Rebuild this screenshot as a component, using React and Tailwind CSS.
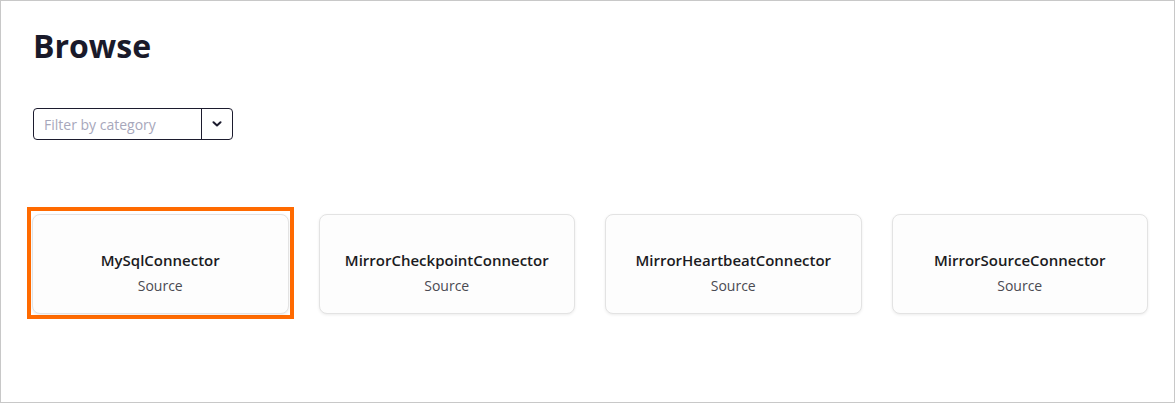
import React from "react"

const connectors = [
  { name: "MySqlConnector", type: "Source", selected: true },
  { name: "MirrorCheckpointConnector", type: "Source" },
  { name: "MirrorHeartbeatConnector", type: "Source" },
  { name: "MirrorSourceConnector", type: "Source" },
]

function ConnectorCard({ name, type }) {
  return (
    <div className="h-[100px] rounded-lg border border-[#e3e3e3] bg-[#fdfdfd] shadow-[0_1px_3px_rgba(0,0,0,0.08)] flex flex-col items-center pt-[35px]">
      <div className="text-[15px] leading-5 font-semibold text-[#1b1b22]">{name}</div>
      <div className="mt-[6px] text-[14px] leading-5 text-[#4a4a52]">{type}</div>
    </div>
  )
}

export default function App() {
  return (
    <div
      className="h-[403px] border border-[#c8c8c8] bg-white pl-[31px] pr-[26px]"
      style={{ fontFamily: '"Open Sans", "Noto Sans", sans-serif' }}
    >
      <h1 className="pl-[1px] pt-[25px] text-[32px] leading-[40px] font-bold text-[#1a1a2a]">
        Browse
      </h1>

      <div className="ml-[1px] mt-[42px] flex h-[32px] w-[200px] rounded-[4px] border border-[#1c1b2e] bg-white">
        <div className="flex-1 flex items-center pl-[10px] text-[14px] text-[#a7a7bb]">
          Filter by category
        </div>
        <div className="w-[31px] border-l border-[#1c1b2e] flex items-center justify-center">
          <svg width="10" height="6" viewBox="0 0 10 6" fill="none">
            <path
              d="M1.5 1.2 L5 4.5 L8.5 1.2"
              stroke="#1c1b2e"
              strokeWidth="2"
              strokeLinecap="round"
              strokeLinejoin="round"
            />
          </svg>
        </div>
      </div>

      <div className="mt-[74px] grid grid-cols-4 gap-[30px]">
        {connectors.map((c) =>
          c.selected ? (
            <div
              key={c.name}
              className="-mx-[5px] -mt-[7px] -mb-[5px] border-4 border-[#ff6a00] px-[1px] pt-[3px] pb-[1px]"
            >
              <ConnectorCard {...c} />
            </div>
          ) : (
            <ConnectorCard key={c.name} {...c} />
          )
        )}
      </div>
    </div>
  )
}
